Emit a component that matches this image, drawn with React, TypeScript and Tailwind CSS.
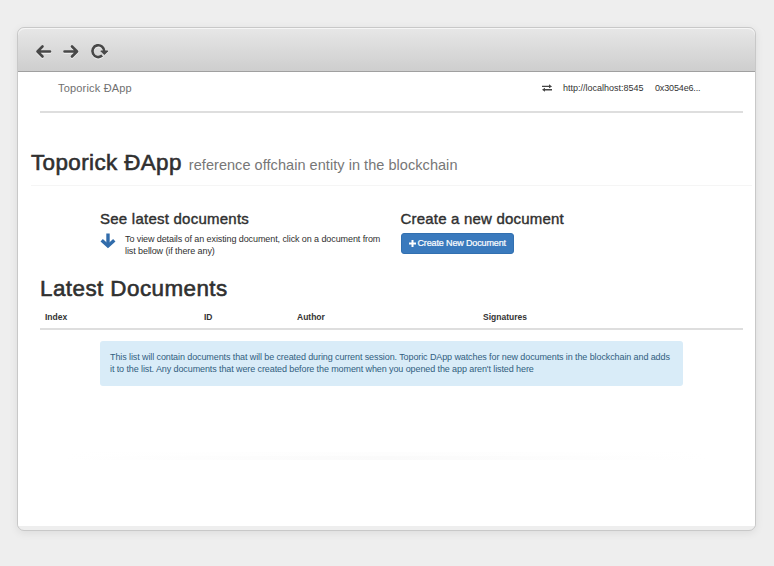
import React from "react";

function BrowserBar() {
  return (
    <header className="flex h-[44px] shrink-0 items-start rounded-t-[7px] border-b border-[#a0a0a0] bg-linear-to-b from-[#e7e7e7] to-[#cecece] pt-[15px] pl-[17px] shadow-[inset_0_1px_0_#f6f6f6]">
      <svg width="76" height="18" viewBox="0 0 76 18" fill="none">
        <g stroke="#f1f1f1" strokeWidth="2.6" strokeLinecap="round" strokeLinejoin="round" transform="translate(0 1)">
          <path d="M15 8.5H3M7.5 3.5L2.5 8.5L7.5 13.5M29.5 8.5h12M37 3.5l5 5l-5 5" />
          <path d="M67.2 12.6A5.9 5.9 0 1 1 69.2 8.5" />
        </g>
        <g stroke="#484848" strokeWidth="2.6" strokeLinecap="round" strokeLinejoin="round">
          <path d="M15 8.5H3M7.5 3.5L2.5 8.5L7.5 13.5M29.5 8.5h12M37 3.5l5 5l-5 5" />
          <path d="M67.2 12.6A5.9 5.9 0 1 1 69.2 8.5" strokeLinecap="butt" />
        </g>
        <path d="M65.8 8h7l-3.5 3.5z" fill="#484848" stroke="#484848" strokeWidth="1" strokeLinejoin="round" />
      </svg>
    </header>
  );
}

function TransferIcon() {
  return (
    <svg width="10" height="8" viewBox="0 0 10 8" fill="#444">
      <path d="M0 1.7h7V.3L10 2.4 7 4.2V3H0zM10 6.4H3v1.3L0 5.7l3-1.9v1.3h7z" />
    </svg>
  );
}

function AppNav() {
  return (
    <nav className="mr-[12px] ml-[22px] flex h-[41px] items-start border-b-2 border-[#dedede] pl-[18px] text-[#333]">
      <span className="mt-[8px] text-[11px] leading-4 tracking-[0.18px] text-[#707070]">Toporick ÐApp</span>
      <div className="mt-[8px] mr-[42px] ml-auto flex items-center text-[9px] leading-4">
        <TransferIcon />
        <span className="ml-[11px] w-[92px]">http://localhost:8545</span>
        <span className="w-[46px] tracking-[-0.15px]">0x3054e6...</span>
      </div>
    </nav>
  );
}

function Intro() {
  return (
    <div className="ml-[82px] flex pt-[22px]">
      <section className="w-[300.5px]">
        <h3 className="text-[15px] leading-[22px] tracking-[0.24px] text-[#303030] [-webkit-text-stroke:0.4px_#303030]">See latest documents</h3>
        <div className="mt-[3px] flex">
          <svg className="shrink-0" width="16" height="16" viewBox="0 0 16 16" fill="none" stroke="#316cab">
            <path d="M8 .5v11" strokeWidth="3.4" />
            <path d="M1.7 7.3l6.3 5.7l6.3-5.7" strokeWidth="3.5" />
          </svg>
          <p className="ml-[9px] text-[9px] leading-[12.4px] tracking-[-0.09px] whitespace-nowrap text-[#303030]">
            To view details of an existing document, click on a document from
            <br />
            list bellow (if there any)
          </p>
        </div>
      </section>
      <section>
        <h3 className="text-[15px] leading-[22px] tracking-[0.2px] text-[#303030] [-webkit-text-stroke:0.4px_#303030]">Create a new document</h3>
        <button className="mt-[3px] flex h-[21px] w-[113px] items-center rounded-[3px] border border-[#3270b0] bg-[#3a7abd] pl-[7px] text-[9px] tracking-[-0.14px] whitespace-nowrap text-white [-webkit-text-stroke:0.2px_white]">
          <svg className="mr-[2px] shrink-0" width="7" height="7" viewBox="0 0 7 7" fill="none" stroke="white" strokeWidth="2">
            <path d="M3.5 0v7M0 3.5h7" />
          </svg>
          Create New Document
        </button>
      </section>
    </div>
  );
}

function DocumentTable() {
  return (
    <section className="mt-[15px] mr-[12px] ml-[22px]">
      <h1 className="text-[22.4px] leading-[32px] tracking-[0.45px] text-[#303030] [-webkit-text-stroke:0.6px_#303030]">Latest Documents</h1>
      <div className="flex h-[25px] border-b-2 border-[#dedede] pt-[4px] pl-[5px] text-[8.5px] leading-[16px] font-bold text-[#333]">
        <span className="w-[159px]">Index</span>
        <span className="w-[93px]">ID</span>
        <span className="w-[186px]">Author</span>
        <span>Signatures</span>
      </div>
      <div className="mt-[11px] ml-[60px] h-[45px] w-[583px] rounded-[3px] bg-[#d9ecf8] pt-[10px] pl-[10px] text-[9px] leading-[12.4px] tracking-[-0.1px] whitespace-nowrap text-[#315e80]">
        This list will contain documents that will be created during current session. Toporic DApp watches for new documents in the blockchain and adds
        <br />
        it to the list. Any documents that were created before the moment when you opened the app aren't listed here
      </div>
    </section>
  );
}

export default function App() {
  return (
    <div className="h-[566px] w-[774px] overflow-hidden bg-[#eeeeee] pt-[27px] pl-[17px] font-['Liberation_Sans',Arial,sans-serif]">
      <main className="flex h-[504px] w-[739px] flex-col overflow-hidden rounded-[7px] border border-[#c8c8c8] bg-[#eeeeee] shadow-[0_2px_8px_rgba(0,0,0,0.08)]">
        <BrowserBar />
        <div className="h-[454px] bg-white">
          <AppNav />
          <div className="mr-[3px] ml-[13px] flex h-[73px] items-end border-b border-[#f5f5f5] pb-[6px] whitespace-nowrap">
            <h1 className="text-[22.4px] leading-[28px] tracking-[0.4px] text-[#303030] [-webkit-text-stroke:0.6px_#303030]">
              Toporick ÐApp
              <small className="ml-[7px] text-[14.5px] tracking-[0.05px] text-[#777] [-webkit-text-stroke:0]">reference offchain entity in the blockchain</small>
            </h1>
          </div>
          <Intro />
          <DocumentTable />
          <div className="mx-[48px] mt-[66px] flex h-[8px] flex-col justify-end bg-linear-to-r from-white via-[#fdfdfd] to-white">
            <div className="h-[4px] bg-linear-to-r from-white via-[#fafafa] to-white" />
          </div>
        </div>
      </main>
    </div>
  );
}
